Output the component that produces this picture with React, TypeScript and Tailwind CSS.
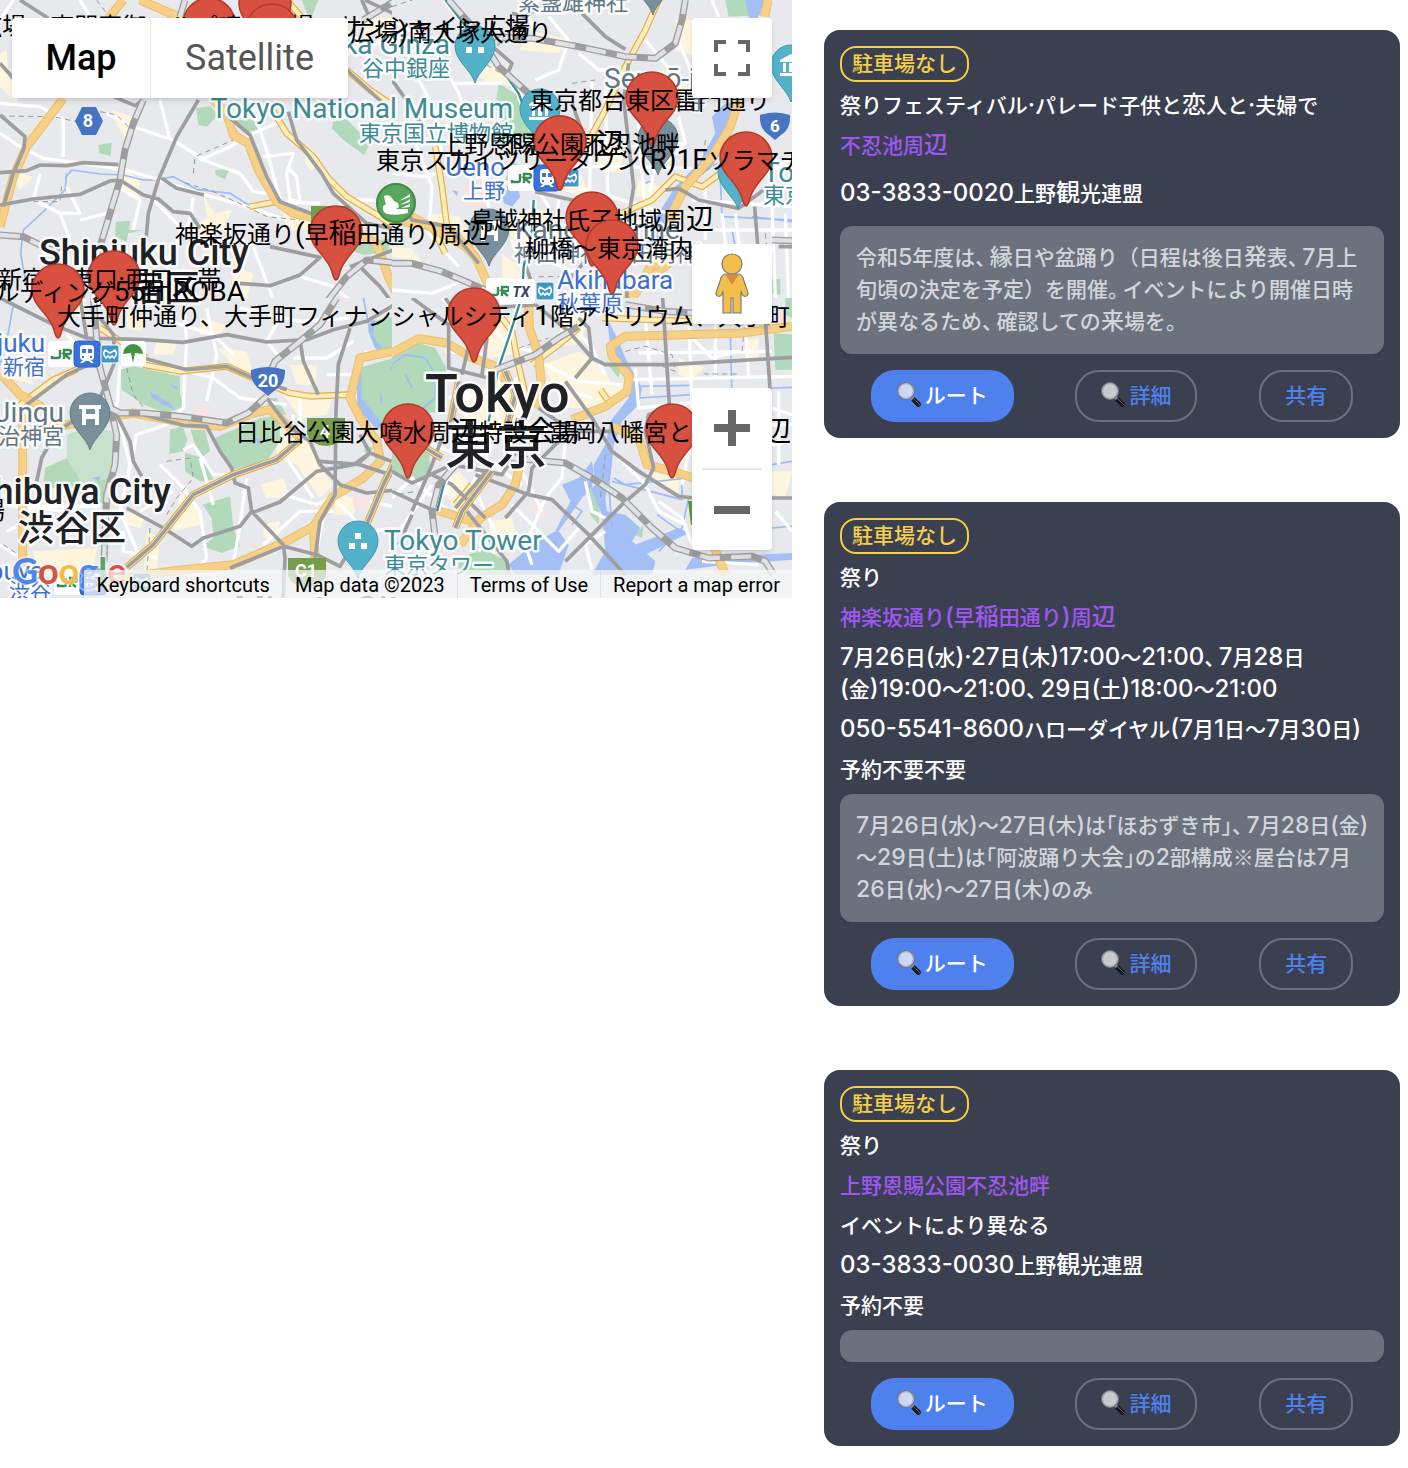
import React from "react";

const CJK = '"Noto Sans CJK JP", sans-serif';
const MAP_FONT = `Roboto, ${CJK}`;

/* ---------- mixed Latin / Japanese text ---------- */

// Latin runs and a few wide kanji are set one size up from the surrounding kana and kanji.
const WIDE = /([\x21-\x7e·]+|[辺稲縁発恋来会観])/;
const PUNCT = /([、。「」～※])/;

function punctClass(ch: string) {
  if (ch === "、" || ch === "。") return "mr-1 [font-feature-settings:'halt']";
  if (ch === "～" || ch === "※") return "font-['Noto_Sans_CJK_JP'] leading-none";
  return "[font-feature-settings:'halt']";
}

function Mixed({ text, small = false }: { text: string; small?: boolean }) {
  return (
    <>
      {text.split(WIDE).map((part, i) =>
        i % 2 ? (
          <span key={i} className={small ? "text-[23px] leading-none" : "text-[24px] leading-none"}>
            {part}
          </span>
        ) : (
          part.split(PUNCT).map((p, j) =>
            j % 2 ? (
              <span key={`${i}-${j}`} className={punctClass(p)}>
                {p}
              </span>
            ) : (
              p
            ),
          )
        ),
      )}
    </>
  );
}

/* ---------- map geometry ---------- */

type Kind =
  | "cream" | "pink" | "park" | "lightPark" | "water" | "stream" | "minor" | "dash"
  | "yellow" | "highway" | "gray" | "edged" | "teal" | "jr";

const ORDER: Kind[] = ["cream", "pink", "lightPark", "park", "water", "stream", "minor", "dash", "yellow", "highway", "gray", "edged", "teal", "jr"];

const PAINT: Record<Kind, { stroke?: string; fill?: string; w?: number; dash?: string }[]> = {
  cream: [{ fill: "#fdf5dd" }],
  pink: [{ fill: "#f8e4e3" }],
  park: [{ fill: "#b2d9b9" }],
  lightPark: [{ fill: "#c6e2cd" }],
  water: [{ fill: "#a3bff6" }],
  stream: [{ stroke: "#9dbcf5", w: 5 }],
  minor: [{ stroke: "#ffffff", w: 10 }],
  dash: [{ stroke: "#9a9a9a", w: 3, dash: "16 12" }],
  yellow: [{ stroke: "#e6ac3c", w: 20 }, { stroke: "#fdedbd", w: 13 }],
  highway: [{ stroke: "#ecc069", w: 27 }, { stroke: "#f5d086", w: 21 }],
  gray: [{ stroke: "#9e9e9e", w: 11 }],
  edged: [{ stroke: "#e6ac3c", w: 22 }, { stroke: "#f6efdc", w: 15 }, { stroke: "#9e9e9e", w: 11 }],
  teal: [{ stroke: "#ffffff", w: 18 }, { stroke: "#3a8c96", w: 7 }],
  jr: [{ stroke: "#9e9e9e", w: 21 }, { stroke: "#dfe1e5", w: 13, dash: "60 34" }],
};

type Tile = { x: number; y: number; paths: Partial<Record<Kind, string[]>> };

const TILES: Tile[] = [
  {
    x: 0,
    y: 0,
    paths: {
      cream: [
        "M0 160L20 150 25 230 60 280 50 310 0 260Z",
        "M335 330L400 350 410 400 375 412 350 375Z",
        "M370 500L420 545 415 590 385 578 355 560Z",
        "M612 590L645 640 695 630 668 690 620 720 560 690 622 655Z",
        "M850 640L930 655 935 690 860 690Z",
        "M920 440L962 470 935 512 915 490Z",
        "M1090 110L1190 90 1180 50 1100 60Z",
        "M60 520L100 530 60 570 50 550Z",
        "M1000 560L1060 590 1020 620Z",
        "M700 800L760 820 740 900 690 900Z",
      ],
      pink: ["M800 290L880 290 850 322Z", "M550 760L590 745 600 800 560 800Z", "M600 860L660 870 650 900 600 900Z"],
      park: [
        "M588 325L630 318 655 345 620 380 595 375Z",
        "M1000 365L1040 358 1110 430 1092 465 1030 420 995 385Z",
        "M295 435L335 428 332 468 298 460Z",
        "M348 665L390 662 388 690 430 690 385 700 380 725 345 710Z",
        "M645 510L688 508 675 538 648 525Z",
        "M905 0L955 0 935 50 970 75 925 50Z",
        "M1030 740L1170 715 1165 755 1090 765Z",
        "M703 360L760 358 775 390 740 397Z",
      ],
      stream: [
        "M0 520L80 512",
        "M195 535L215 510 300 522 370 525 430 540 470 540 520 530 590 568 690 580 755 620",
        "M200 520L195 570 130 635 70 690 62 760 80 860",
      ],
      minor: [
        "M0 400L60 440 130 475 250 490 380 510 480 540 600 580 740 620 860 660",
        "M0 310L120 320 190 360 190 470",
        "M320 340L400 380 520 420 610 480 720 520 760 575 800 580",
        "M480 300L510 420",
        "M600 480L690 440 760 400 830 370",
        "M790 470L880 460 860 520 870 600 900 605 890 530 860 500",
        "M750 300L800 450 840 600",
        "M950 300L1020 340 1100 300",
        "M40 0L0 60",
        "M120 520L100 600 180 640 240 640 200 560",
        "M180 640L210 720 150 800 220 880",
        "M240 660L320 640",
        "M350 560L420 600 400 690",
        "M580 590L570 660 500 780 520 900",
        "M1000 630L1050 600 1120 600 1200 640",
        "M820 605L960 610",
        "M660 680L760 740 820 900",
        "M460 600L540 680 540 740",
        "M900 830L1000 860 1050 900",
        "M240 0L270 50",
        "M1040 130L1100 160 1200 60",
      ],
      dash: [
        "M0 348L160 350 230 365 300 335 350 345 400 395 380 410",
        "M580 520L585 470 700 420 712 395 690 370",
        "M555 548L640 575 740 620 800 650 900 660",
        "M100 605L180 605 185 560",
        "M290 0L320 40",
      ],
      yellow: ["M812 320L860 400 940 470 985 535 1040 590 1140 650 1200 690", "M860 0L905 52", "M1040 210L1110 270 1200 330", "M750 620L830 605"],
      highway: [
        "M370 0L325 55",
        "M190 295L80 440 40 530 0 680",
        "M420 0L540 52",
        "M640 300L680 340 700 405 745 430 775 510 830 605 880 640 950 655",
        "M1050 690L1130 730 1165 830 1200 900",
      ],
      gray: [
        "M60 0L145 55",
        "M0 190L40 235",
        "M0 345L75 410 72 445 40 520 10 620",
        "M0 518L80 512 120 495 200 497 250 488 355 494",
        "M0 615L100 597 240 583 330 543 360 540 430 585 475 597 520 635 570 640 600 685",
        "M340 290L405 317 430 300",
        "M485 535L530 565 612 585",
        "M595 300L530 410 475 540 445 640 438 720",
        "M680 345L750 405 800 530 840 605 945 645",
        "M865 335L890 420 965 520 1000 580 1100 670 1200 690",
        "M810 740L960 772 900 825 810 857 720 850",
        "M1040 210L1150 310 1200 340",
        "M1085 0L1110 55",
        "M1080 800L1140 860 1170 900",
        "M1095 0L1200 50",
        "M1180 750L1050 800",
      ],
      jr: [
        "M430 300L400 370 375 450 360 540 330 640 300 740 240 900",
        "M0 705L70 710 140 745 200 760",
        "M555 0L540 50",
        "M985 900L1040 830 1100 780 1200 790",
        "M1090 60L1190 0",
      ],
    },
  },
  {
    x: 392,
    y: 0,
    paths: {
      cream: [
        "M210 190L330 200 380 260 300 250 220 215Z",
        "M430 95L540 120 500 160 380 150Z",
        "M850 60L920 60 920 170 850 150Z",
        "M350 660L420 620 470 640 440 720 360 740Z",
        "M0 740L60 745 90 785 0 770Z",
        "M470 520L560 510 600 600 480 560Z",
        "M740 540L810 560 800 600 730 590Z",
        "M160 330L240 350 220 400 160 390Z",
        "M620 440L690 440 690 520 620 510Z",
        "M330 760L380 800 400 900 330 880Z",
        "M800 210L880 230 900 330 850 330Z",
        "M120 640L200 650 230 700 120 680Z",
      ],
      pink: ["M215 560L290 540 290 620 220 620Z"],
      park: [
        "M320 250L400 300 420 420 350 400 310 320Z",
        "M1000 0L1110 0 1110 45 1010 50Z",
        "M1140 838L1165 838 1165 885 1140 880Z",
        "M360 480L385 500 370 540 340 540Z",
      ],
      water: [
        "M1060 0L1120 0 1090 70 1070 50Z",
        "M1000 310L1045 310 1010 420 960 500 890 560 870 600 830 650 800 720 770 760 750 720 800 640 850 560 920 490 970 400 960 350Z",
        "M330 570L370 540 385 590 360 620 335 610Z",
        "M180 570L198 575 195 588Z",
        "M640 860L700 850 680 900 630 900Z",
      ],
      stream: ["M985 540L990 650 1200 660", "M760 550L785 540", "M1080 650L1200 665", "M1020 690L1060 900", "M620 860L760 760"],
      minor: [
        "M0 60L120 130 200 280 260 460",
        "M0 180L80 240 130 330 150 470",
        "M400 0L430 110",
        "M470 50L530 120 500 210 430 240",
        "M560 160L620 210 700 210",
        "M540 500L680 500 900 505",
        "M600 240L590 700",
        "M640 250L650 700",
        "M560 420L720 440 880 430",
        "M550 560L830 640",
        "M730 250L760 640",
        "M800 440L760 650",
        "M860 350L880 430 810 500",
        "M400 510L470 620 440 760",
        "M180 250L330 250",
        "M250 410L290 620 330 700",
        "M60 400L120 560 110 700 200 800",
        "M0 520L100 530 200 500",
        "M940 540L940 720",
        "M990 640L1020 900",
        "M1030 640L1050 800",
        "M900 600L1200 620",
        "M940 690L1200 690",
        "M1140 600L1150 900",
        "M1180 640L1190 900",
        "M1060 560L1160 500 1200 470",
        "M400 680L640 800 780 850",
        "M420 760L600 840",
        "M360 720L420 900",
        "M500 600L480 780",
        "M0 870L120 880 220 840",
        "M740 660L740 740",
        "M850 100L900 220",
        "M760 120L860 240",
        "M960 0L980 50",
      ],
      dash: ["M0 20L60 0", "M260 180L360 240 420 280", "M540 250L610 240", "M440 830L540 830 600 900", "M1120 700L1140 900", "M940 420L930 520 990 480"],
      yellow: ["M130 440L150 560 165 680", "M800 0L760 90 700 200 640 330 580 440", "M690 640L780 600 850 530 930 560 1000 510", "M30 640L120 680 160 760"],
      highway: [
        "M1128 0L1118 50",
        "M1040 300L1015 380 960 470 880 560 840 640 815 740 770 810 720 900",
        "M0 660L170 685 250 770 310 900",
        "M60 650L240 750",
        "M840 780L760 850 680 900",
      ],
      gray: [
        "M570 40L640 110 700 148",
        "M0 240L50 310 90 380",
        "M710 190L695 300 725 560 712 640 702 760 705 900",
        "M430 575L540 600 640 620",
        "M820 570L860 565 920 600 1040 625 1115 570",
        "M1088 620L1110 900",
        "M0 560L60 660 170 680 260 790",
        "M540 310L580 420",
        "M380 740L420 850 400 900",
        "M290 130L360 190 350 215",
        "M470 0L400 50 360 40",
        "M530 840L600 760 680 660",
        "M1160 740L1200 740",
      ],
      teal: ["M160 0L230 90 310 180 380 280 420 390", "M425 600L420 690 395 800 390 900"],
      jr: [
        "M310 130L330 112 420 115 560 140 700 170 790 175 850 130 870 60 880 0",
        "M170 0L250 90 320 200 420 290",
        "M0 790L60 790 150 815 210 840 280 870",
        "M1140 720L1200 722",
      ],
    },
  },
  {
    x: 0,
    y: 298,
    paths: {
      cream: [
        "M190 0L260 0 250 60 200 40Z",
        "M470 130L530 140 520 170 460 170Z",
        "M380 30L440 60 420 100 380 90Z",
        "M600 60L680 80 660 110 600 110Z",
        "M820 380L920 430 960 510 1000 560 960 600 890 500 830 470Z",
        "M850 290L1000 300 980 350 900 360Z",
        "M650 150L740 160 760 230 700 200Z",
        "M780 560L850 540 870 600 800 600Z",
        "M370 640L440 650 420 690 380 680Z",
        "M100 760L290 750 280 820 110 840Z",
        "M540 580L600 640 600 680 520 700Z",
        "M10 180L80 170 100 260 30 240Z",
        "M790 680L840 670 830 720 790 720Z",
        "M1010 590L1080 600 1060 650 1000 650Z",
        "M440 700L480 720 470 830 430 830Z",
        "M870 200L950 200 950 260 890 260Z",
      ],
      pink: ["M575 325L625 325 625 355 590 355Z", "M1060 590L1110 600 1100 635 1060 630Z", "M1010 0L1040 0 1040 20Z"],
      lightPark: ["M200 410L270 385 335 400 345 440 325 540 340 600 250 560 200 480Z"],
      park: [
        "M360 215L400 205 540 235 540 290 552 325 500 345 430 320 365 275Z",
        "M135 510L200 480 250 560 330 540 320 620 130 560Z",
        "M510 395L548 385 562 425 550 460 508 468Z",
        "M572 395L615 395 630 460 605 478 585 440Z",
        "M645 420L780 360 838 352 840 430 800 490 700 515 668 470Z",
        "M555 465L612 480 640 545 600 550 555 520Z",
        "M608 620L690 595 700 690 720 745 665 765 605 745 640 720 635 660Z",
        "M1118 70L1200 50 1200 150 1130 160 1105 100Z",
        "M1075 210L1200 175 1200 430 1130 390 1075 320Z",
        "M1090 440L1120 450 1100 480Z",
        "M790 300L830 300 860 350 820 350Z",
      ],
      water: [
        "M450 280L510 315 525 335 490 320 455 300Z",
        "M1070 215L1085 215 1085 300 1150 380 1130 395 1072 330Z",
        "M1110 70L1125 65 1118 110 1150 155 1125 150 1105 100Z",
        "M1140 285L1150 300 1140 320Z",
        "M765 420L780 425 778 445Z",
        "M275 540L300 535 298 550Z",
        "M505 258L532 265 530 275Z",
        "M1165 200L1185 215 1175 220Z",
      ],
      stream: ["M0 200L20 130 40 20", "M1090 0L1110 100"],
      minor: [
        "M550 0L560 130 555 220 550 330 500 380 410 410 380 560",
        "M620 30L650 170 620 310",
        "M700 170L640 110 480 60",
        "M720 30L900 70 1050 60",
        "M0 110L100 160",
        "M0 590L120 625 300 625",
        "M0 620L200 640",
        "M0 740L90 800",
        "M360 200L350 340 390 500 360 640 420 780",
        "M560 220L640 240 720 300 860 320",
        "M550 455L580 440 640 530 700 530",
        "M540 560L600 640 620 780 580 830",
        "M740 540L720 680 700 800",
        "M600 480L640 620",
        "M480 500L560 580",
        "M790 740L900 640 1000 640",
        "M980 230L1060 230 1100 160",
        "M880 180L980 180 1060 130",
        "M880 350L860 480 940 600",
        "M900 300L900 430",
        "M1000 600L1100 700 1200 690",
        "M1110 610L1200 630",
        "M200 110L250 160 180 200",
        "M130 570L60 680 20 700",
        "M850 40L800 130 840 180",
        "M420 640L520 580",
        "M370 700L370 760 470 780",
        "M980 600L950 760",
        "M470 820L640 830 660 900",
        "M850 590L950 620 1010 590",
      ],
      dash: ["M380 210L400 290 440 340", "M500 490L570 480 580 540 530 600 500 650", "M10 740L100 800", "M450 690L440 830"],
      yellow: ["M430 200L540 220 680 205 760 240 870 285 930 295 1050 290", "M60 320L160 245 230 215", "M300 90L440 180"],
      highway: [
        "M0 225L60 290 130 330 160 345",
        "M68 350L68 900",
        "M0 430L150 390 280 365 400 345 560 375 660 385 760 345 810 335 850 370 900 420",
        "M1200 155L1080 180 1050 300 1080 360 1130 430 1142 490 1090 540 1000 595 940 685 850 735 700 800 550 815 400 835 280 880",
        "M940 680L945 780",
      ],
      gray: [
        "M430 125L550 133 680 110 800 132 920 125 1000 95 1100 70 1200 10",
        "M430 180L560 215 680 205 760 240 860 275",
        "M60 30L160 80 260 120 430 125",
        "M900 125L910 190 955 290",
        "M1050 90L1015 200 1008 340 1005 590 960 670 945 780",
        "M300 60L340 110 345 190 300 300",
        "M80 320L200 230 290 190",
        "M110 550L125 480 170 400 300 320",
        "M350 350L390 430 400 490 425 535",
        "M430 350L550 382 620 385 660 460 695 510 705 555 745 570 755 640 850 740 855 780 850 900",
        "M755 645L840 612 950 520 1060 500 1110 465 1200 500",
        "M380 630L490 690 575 745 610 720 720 685 755 640",
        "M690 810L850 745 950 770 1020 805 1060 740",
        "M800 300L860 380 930 430 960 500 1020 560 1100 585 1200 575",
        "M960 490L1080 500 1200 540",
        "M1070 500L1110 465 1080 410",
        "M0 0L60 30",
        "M240 0L260 120",
      ],
      edged: ["M900 425L830 485 700 530 580 590 460 740 380 808", "M1190 480L1150 560 1100 680"],
      jr: [
        "M280 0L290 120 300 210 330 320 350 410 345 500 320 590 312 790",
        "M330 330L360 345 430 345 540 355 680 375 745 345 800 295",
        "M810 225L825 190 900 130 960 80 1010 0",
      ],
    },
  },
  {
    x: 392,
    y: 298,
    paths: {
      cream: [
        "M270 60L370 60 360 170 290 180Z",
        "M450 200L560 160 640 220 680 300 620 330 520 330Z",
        "M210 290L380 240 400 330 350 420 220 420Z",
        "M520 60L580 90 560 140 480 150Z",
        "M290 670L360 660 380 740 300 770Z",
        "M860 180L940 210 900 240 860 230Z",
        "M1060 130L1100 120 1100 180 1060 180Z",
        "M1140 520L1200 520 1180 600 1140 590Z",
        "M150 560L200 520 270 600 200 660Z",
        "M770 520L860 540 860 590 800 560Z",
        "M660 270L700 250 680 320 640 330Z",
        "M500 50L600 40 560 90Z",
      ],
      pink: ["M415 620L465 640 460 660 420 645Z", "M1120 50L1180 40 1190 90 1140 80Z"],
      park: [
        "M0 175L60 130 130 150 162 210 165 310 130 345 0 330Z",
        "M0 450L110 450 115 520 60 555 0 520Z",
        "M1145 105L1200 110 1200 215 1150 215Z",
        "M200 790L265 748 345 790 360 830 200 830Z",
        "M1180 0L1200 0 1200 60 1180 50Z",
        "M640 190L690 200 680 240Z",
        "M590 560L625 590 620 680 595 650Z",
        "M730 710L755 680 750 720Z",
      ],
      water: [
        "M645 60L680 130 700 180 750 270 740 320 690 370 665 440 655 520 640 600 645 640 700 650 745 690 720 730 790 790 780 830 600 830 640 760 630 650 600 580 605 500 640 440 655 370 710 300 715 240 660 190Z",
        "M600 490L560 540 510 560 535 610 490 700 420 740 350 800 370 830 500 830 530 740 500 700 570 600 610 560Z",
        "M900 780L1200 765 1200 785 1000 800 880 815Z",
        "M680 760L860 690 890 705 760 770Z",
      ],
      stream: [
        "M0 200L40 170 100 180 130 230 130 300 80 340",
        "M40 230L60 270",
        "M740 300L900 290",
        "M740 265L900 262",
        "M665 540L700 560 890 540",
        "M890 600L870 690 800 760",
        "M660 550L870 605 870 530",
        "M795 650L880 710",
        "M540 620L570 640 540 680",
        "M1140 270L1200 268",
        "M1015 110L1020 290",
        "M1140 690L1200 685",
        "M660 470L650 560 660 690",
        "M1140 500L1200 490",
      ],
      minor: [
        "M740 165L1140 160",
        "M730 210L740 330 1140 290",
        "M760 60L780 290",
        "M890 40L900 330",
        "M970 60L970 240",
        "M1060 60L1070 240",
        "M720 245L1200 235",
        "M900 120L960 180 1040 160",
        "M480 20L600 150 640 230",
        "M300 90L350 140 420 160",
        "M460 200L560 250 690 260",
        "M450 250L600 300",
        "M520 430L510 540 460 600",
        "M580 550L600 640 640 660",
        "M350 440L450 640",
        "M300 440L240 560 310 700 260 760",
        "M360 620L500 760 560 690",
        "M460 600L400 740 420 800",
        "M200 450L260 470 390 560",
        "M120 440L200 470 160 590",
        "M0 600L60 540 180 650",
        "M20 700L120 560",
        "M380 240L260 290 170 300",
        "M330 230L300 300 340 420",
        "M380 250L370 370 300 400",
        "M230 250L220 390",
        "M160 160L280 170",
        "M680 480L760 560 800 640 880 680",
        "M900 410L870 560",
        "M820 390L1200 380",
        "M800 610L870 660 900 740",
        "M1140 330L1200 350",
        "M1140 440L1200 430",
        "M1150 640L1200 700",
        "M1160 280L1160 500",
        "M930 790L1100 800",
        "M150 0L200 50 280 80",
        "M640 700L580 740 600 815",
      ],
      dash: ["M700 160L760 145 840 170 850 220 770 190", "M935 225L940 228 1040 228", "M380 150L470 120", "M640 470L625 600", "M1060 60L1050 160", "M20 590L70 580", "M930 480L1000 500"],
      yellow: ["M330 60L360 100 375 180 400 290", "M420 200L500 140 560 90", "M630 60L900 70", "M625 275L650 310", "M240 560L190 620"],
      highway: [
        "M0 165L80 122 165 135 240 180 310 205 350 260",
        "M410 0L412 90 440 170 447 250 430 330",
        "M540 365L640 325 705 280 712 235 660 175 655 145 700 115 830 112 1050 105 1200 85",
        "M660 385L740 420 765 500 840 520 905 540",
        "M390 470L370 560 330 620 265 660 205 740",
        "M130 635L240 670",
        "M965 745L1000 830",
      ],
      gray: [
        "M160 0L215 80 300 100",
        "M60 0L170 80 170 210 310 245",
        "M430 20L530 100 600 180 640 200 830 200 1000 190 1200 178",
        "M560 60L590 90 600 180 550 240",
        "M812 0L832 320",
        "M1120 60L1135 290",
        "M430 20L300 30 180 60",
        "M520 250L600 360 660 460 740 520 860 595 910 600",
        "M830 325L770 350 760 400 785 510 760 560 690 620 520 790",
        "M250 530L410 590 480 605 590 710 700 830",
        "M340 660L410 580 420 510 500 430",
        "M0 580L130 640",
        "M0 520L60 555 180 500 330 530 380 450",
        "M225 640L345 790 350 820",
        "M210 230L240 100",
        "M270 230L285 120",
        "M190 630L300 500",
        "M60 650L20 740",
        "M1140 600L1200 600",
        "M60 640L120 500 150 420",
        "M280 660L180 560 120 530",
        "M440 330L540 400 660 400",
      ],
      edged: ["M300 520L210 640 190 690", "M200 250L170 400", "M340 220L370 290 340 400", "M100 450L150 480"],
      teal: ["M388 0L350 120 318 215 290 370", "M180 500L155 560 135 640"],
      jr: [
        "M310 215L430 170 500 120 560 85",
        "M260 430L200 490 140 560 120 640 130 720",
        "M360 480L520 495 600 540 690 600 780 690 850 750 950 780 1080 775 1120 790 1145 830",
        "M700 20L820 40 900 45",
      ],
    },
  },
];

function MapTile({ x, y, paths }: Tile) {
  return (
    <svg x={x} y={y} width="400" height="300" viewBox="0 0 1200 900">
      <rect width="1200" height="900" fill="#e7e9ed" />
      {ORDER.map((kind) => (
        <g key={kind}>
          {PAINT[kind].map((p, i) => (
            <path
              key={i}
              d={(paths[kind] ?? []).join("")}
              fill={p.fill ?? "none"}
              stroke={p.stroke}
              strokeWidth={p.w}
              strokeDasharray={p.dash}
              strokeLinejoin="round"
            />
          ))}
        </g>
      ))}
    </svg>
  );
}

/* ---------- map labels ---------- */

const TEAL = "#3c8a94";
const SLATE = "#607683";
const BLUE = "#3d6fd0";
const INK = "#202124";

type Label = { t: string; x: number; y: number; s: number; c: string; end?: boolean; w?: number };

const LABELS: Label[] = [
  { t: "素盞雄神社", x: 518, y: 10, s: 22, c: SLATE },
  { t: "Yanaka Ginza", x: 450, y: 54, s: 28, c: TEAL, end: true },
  { t: "谷中銀座", x: 450, y: 76, s: 22, c: TEAL, end: true },
  { t: "Tokyo National Museum", x: 513, y: 118, s: 28, c: TEAL, end: true },
  { t: "東京国立博物館", x: 513, y: 141, s: 22, c: TEAL, end: true },
  { t: "Sensō-ji", x: 604, y: 88, s: 28, c: SLATE },
  { t: "浅草寺", x: 640, y: 109, s: 22, c: SLATE },
  { t: "Ueno", x: 505, y: 176, s: 26, c: BLUE, end: true },
  { t: "上野", x: 505, y: 198, s: 21, c: BLUE, end: true },
  { t: "Tokyo Skytree", x: 763, y: 182, s: 28, c: TEAL },
  { t: "東京スカイツリー", x: 763, y: 203, s: 22, c: TEAL },
  { t: "Kanda Shrine", x: 515, y: 239, s: 28, c: SLATE },
  { t: "神田神社(神田明神)", x: 514, y: 261, s: 22, c: SLATE },
  { t: "Akihabara", x: 557, y: 289, s: 26, c: BLUE },
  { t: "秋葉原", x: 557, y: 311, s: 22, c: BLUE },
  { t: "Shinjuku City", x: 249, y: 265, s: 36, c: INK, end: true, w: 500 },
  { t: "新宿区", x: 92, y: 301, s: 36, c: INK, w: 500 },
  { t: "Shinjuku", x: 45, y: 352, s: 26, c: BLUE, end: true },
  { t: "新宿", x: 45, y: 374, s: 21, c: BLUE, end: true },
  { t: "Meiji Jingu", x: 64, y: 422, s: 28, c: SLATE, end: true },
  { t: "明治神宮", x: 64, y: 444, s: 22, c: SLATE, end: true },
  { t: "Shibuya City", x: 171, y: 504, s: 36, c: INK, end: true, w: 500 },
  { t: "渋谷区", x: 18, y: 541, s: 36, c: INK, w: 500 },
  { t: "Tokyo", x: 425, y: 412, s: 54, c: INK, w: 500 },
  { t: "東京", x: 445, y: 464, s: 51, c: INK, w: 500 },
  { t: "Tokyo Tower", x: 384, y: 550, s: 28, c: TEAL },
  { t: "東京タワー", x: 384, y: 573, s: 22, c: TEAL },
  { t: "Shibuya", x: 44, y: 580, s: 26, c: BLUE, end: true },
  { t: "渋谷", x: 9, y: 598, s: 21, c: BLUE },
  { t: "Minato City", x: 234, y: 622, s: 36, c: INK, w: 500 },
];

type Poi = { x: number; y: number; c: string; e: string; icon: "torii" | "museum" | "dots" | "squares" | "none" };

const POIS: Poi[] = [
  { x: 653, y: -22, c: "#78909c", e: "#607d8b", icon: "none" },
  { x: 475, y: 46, c: "#53b1c9", e: "#3f97ae", icon: "squares" },
  { x: 540, y: 109, c: "#53b1c9", e: "#3f97ae", icon: "museum" },
  { x: 791, y: 65, c: "#53b1c9", e: "#3f97ae", icon: "museum" },
  { x: 658, y: 138, c: "#7a8f9c", e: "#607d8b", icon: "none" },
  { x: 738, y: 172, c: "#53b1c9", e: "#3f97ae", icon: "none" },
  { x: 489, y: 229, c: "#7a8f9c", e: "#607d8b", icon: "torii" },
  { x: 90, y: 413, c: "#7a8f9c", e: "#607d8b", icon: "torii" },
  { x: 358, y: 541, c: "#53b1c9", e: "#3f97ae", icon: "dots" },
];

function PoiPin({ x, y, c, e, icon }: Poi) {
  return (
    <g transform={`translate(${x} ${y})`}>
      <path d="M0 37C-3 25-20 15-20 0A20 20 0 0 1 20 0C20 15 3 25 0 37Z" fill={c} stroke={e} />
      {icon === "dots" && <path d="M-3-8h6v6h-6zM-9 2h6v6h-6zM3 2h6v6h-6z" fill="#fff" />}
      {icon === "squares" && <path d="M-9 1h6v6h-6zM3 1h6v6h-6z" fill="#fff" />}
      {icon === "torii" && <path d="M-11-8h22v4h-2v16h-4V6h-9v6h-4V-4h-3zM-4-4v5h9v-5z" fill="#fff" fillRule="evenodd" />}
      {icon === "museum" && <path d="M-11-5L0-11 11-5v2h-22zM-8-2h3v9h-3zM-2-2h4v9h-4zM5-2h3v9H5zM-11 8h22v3h-22z" fill="#fff" />}
    </g>
  );
}

function JrIcon({ x, y }: { x: number; y: number }) {
  return (
    <g transform={`translate(${x} ${y})`}>
      <rect x="-13" y="-13" width="27" height="26" rx="3" fill="#fff" />
      <path d="M-9 2v2h6q2 0 2-2v-6M3 5v-9h5q2 0 2 2t-2 2h-5l6 5" fill="none" stroke="#3a8a58" strokeWidth="2.4" />
    </g>
  );
}

function TrainIcon({ x, y }: { x: number; y: number }) {
  return (
    <g transform={`translate(${x} ${y})`}>
      <rect x="-13" y="-13" width="26" height="26" rx="4" fill="#3872dd" stroke="#2d5fc4" />
      <path d="M-7-6q0-3 4-3h6q4 0 4 3v9q0 3-3 3l3 3h-3l-2-2h-4l-2 2h-3l3-3q-3 0-3-3zM-5-5v4h4v-4zM1-5v4h4v-4zM-5 2v2h2v-2zM3 2v2h2v-2z" fill="#fff" fillRule="evenodd" />
    </g>
  );
}

function MetroIcon({ x, y }: { x: number; y: number }) {
  return (
    <g transform={`translate(${x} ${y})`}>
      <rect x="-9" y="-9" width="18" height="18" rx="2" fill="#3f97c6" stroke="#fff" />
      <path d="M0-1L-5-4Q-8 0-4 4L-2 2 0 4 2 2 4 4Q8 0 5-4Z" fill="none" stroke="#fff" strokeWidth="1.6" />
    </g>
  );
}

/* ---------- event markers ---------- */

type Marker = { x: number; y: number; label: string; lx: number; end?: boolean };

const MARKERS: Marker[] = [
  { x: 265, y: 52, label: "", lx: 0 },
  { x: 209, y: 72, label: "トンネル広場・東門専御アルパ噴水広場・サンシャイン広場", lx: 530, end: true },
  { x: 272, y: 78, label: "大塚駅前(トランパル大塚・広場)南大塚大通り", lx: 552, end: true },
  { x: 652, y: 146, label: "東京都台東区雷門通り", lx: 530 },
  { x: 560, y: 190, label: "不忍池周辺", lx: 500 },
  { x: 560, y: 190, label: "上野恩賜公園不忍池畔", lx: 440 },
  { x: 746, y: 206, label: "東京スカイツリータウン(R)1Fソラマチひろば", lx: 376 },
  { x: 592, y: 266, label: "鳥越神社氏子地域周辺", lx: 470 },
  { x: 336, y: 280, label: "神楽坂通り(早稲田通り)周辺", lx: 175 },
  { x: 612, y: 294, label: "柳橋～東京湾内", lx: 525 },
  { x: 114, y: 325, label: "新宿駅東口·西口一帯", lx: -2 },
  { x: 58, y: 338, label: "新宿三井ビルディング55HIROBA", lx: 245, end: true },
  { x: 474, y: 362, label: "大手町仲通り、大手町フィナンシャルシティ1階アトリウム、大手町", lx: 57 },
  { x: 408, y: 478, label: "日比谷公園大噴水周辺特設会場", lx: 235 },
  { x: 672, y: 478, label: "富岡八幡宮とその周辺", lx: 548 },
  { x: -80, y: 556, label: "代々木公園広場", lx: 5, end: true },
];

function MarkerPin({ x, y, label, lx, end }: Marker) {
  return (
    <g>
      <path
        transform={`translate(${x} ${y})`}
        d="M0 0C-2 0-3-4-4-8C-8-24-26-32-26-48A26 26 0 0 1 26-48C26-32 8-24 4-8C3-4 2 0 0 0Z"
        fill="#d85040"
        stroke="#b23a2c"
        strokeWidth="1.5"
      />
      <text x={lx} y={y - 37} fontSize="24" fill="#000" textAnchor={end ? "end" : "start"}>
        {label.split(/([\x21-\x7e·]+|[辺稲会])/).map((p, i) =>
          i % 2 ? (
            <tspan key={i} fontSize="28">
              {p}
            </tspan>
          ) : (
            p
          ),
        )}
      </text>
    </g>
  );
}

function MapCanvas() {
  return (
    <svg className="absolute inset-0 h-full w-full" viewBox="0 0 792 598" preserveAspectRatio="xMidYMid slice" fontFamily={MAP_FONT} role="img" aria-label="Map of Tokyo">
      {TILES.map((t) => (
        <MapTile key={`${t.x}-${t.y}`} {...t} />
      ))}

      <path d="M82 107h14l7 14-7 14H82l-7-14z" fill="#4674c2" />
      <text x="88" y="127" fontSize="18" fontWeight="700" fill="#fff" textAnchor="middle">8</text>
      <path d="M251 370q17-6 34 0q1 14-11 21l-6 5-6-5q-12-7-11-21z" fill="#4674c2" />
      <text x="268" y="387" fontSize="18" fontWeight="700" fill="#fff" textAnchor="middle">20</text>
      <path d="M760 115q15-5 30 0q1 14-9 20l-6 5-6-5q-10-6-9-20z" fill="#4674c2" />
      <text x="775" y="132" fontSize="17" fontWeight="700" fill="#fff" textAnchor="middle">6</text>
      <path d="M311 206h38v24h-38z" fill="#759d4c" />
      <path d="M307 418h38v16q-4 11-19 12q-15-1-19-12z" fill="#759d4c" />
      <text x="325" y="438" fontSize="18" fontWeight="700" fill="#fff" textAnchor="middle">4</text>
      <path d="M288 558h38v18q-4 10-19 11q-15-1-19-11z" fill="#759d4c" />
      <text x="306" y="577" fontSize="18" fontWeight="700" fill="#fff" textAnchor="middle">C1</text>
      <path d="M688 501h20v24h-17z" fill="#5f9440" />

      {POIS.map((p) => (
        <PoiPin key={`${p.x}-${p.y}`} {...p} />
      ))}
      <circle cx="396" cy="203" r="19" fill="#58a65c" stroke="#3f8a46" strokeWidth="2" />
      <path d="M384 196q5-2 7 1l3 4 4 2 1 4-3 2h12v4q-11 3-21 1-5-2-4-8l3-2-1-3zM399 201l11-7v3zM400 205l10-6v3zM401 208l9-4v3z" fill="#fff" />

      {LABELS.map((l) => (
        <text
          key={l.t + l.y}
          x={l.x}
          y={l.y}
          fontSize={l.s}
          fontWeight={l.w ?? 400}
          fill={l.c}
          textAnchor={l.end ? "end" : "start"}
          stroke="#fff"
          strokeOpacity="0.85"
          strokeWidth="5"
          strokeLinejoin="round"
          paintOrder="stroke"
        >
          {l.t}
        </text>
      ))}

      <JrIcon x={61} y={354} />
      <TrainIcon x={87} y={354} />
      <MetroIcon x={110} y={354} />
      <rect x="121" y="341" width="25" height="25" rx="3" fill="#fff" />
      <path d="M123 354a10 10 0 0 1 20 0l-8-1-2 10-2-10z" fill="#45923f" />
      <JrIcon x={521} y={178} />
      <TrainIcon x={547} y={178} />
      <MetroIcon x={570} y={178} />
      <JrIcon x={499} y={291} />
      <rect x="509" y="279" width="26" height="25" rx="3" fill="#fff" />
      <text x="521" y="297" fontSize="14" fontWeight="700" fontStyle="italic" fill="#2c3f66" textAnchor="middle">TX</text>
      <MetroIcon x={545} y={291} />
      <JrIcon x={67} y={582} />
      <TrainIcon x={93} y={582} />
      <MetroIcon x={142} y={582} />

      {MARKERS.map((m, i) => (
        <MarkerPin key={i} {...m} />
      ))}
    </svg>
  );
}

const GOOGLE: [string, string][] = [
  ["G", "text-[#4f86ec]"],
  ["o", "text-[#d9503f]"],
  ["o", "text-[#f2bd42]"],
  ["g", "text-[#4f86ec]"],
  ["l", "text-[#58a65c]"],
  ["e", "text-[#d9503f]"],
];

function Pegman() {
  return (
    <svg width="36" height="62" viewBox="0 0 36 62" aria-hidden="true">
      <path
        d="M11 21h14q3 1 4 4l5 15q0 3-3 3.500-2 0-3-2.500l-1-3v22h-8V45h-2v15h-8V38l-1 3q-1 2.500-3 2.500-3-.5-3-3.500l5-15q1-3 4-4z"
        fill="#f3bf4b"
        stroke="#7d7d7d"
        strokeWidth="1.2"
      />
      <path d="M11 21h14l-7 11z" fill="#d68a3f" />
      <circle cx="18" cy="11" r="10" fill="#f3bf4b" stroke="#7d7d7d" strokeWidth="1.2" />
    </svg>
  );
}

const CONTROL = "flex h-20 w-20 items-center justify-center rounded bg-white shadow-md";

function MapPanel() {
  return (
    <section className="relative aspect-[792/598] self-start overflow-hidden font-[Roboto]">
      <MapCanvas />

      <div className="absolute top-[18px] left-3 flex rounded bg-white text-4xl shadow-md">
        <button type="button" className="h-20 w-[139px] border-r border-gray-200 font-medium text-black">
          Map
        </button>
        <button type="button" className="h-20 w-[197px] text-[#565656]">
          Satellite
        </button>
      </div>

      <button type="button" aria-label="Toggle fullscreen view" className={`${CONTROL} absolute top-[18px] right-5`}>
        <svg width="36" height="36" viewBox="0 0 36 36" fill="#666" aria-hidden="true">
          <path d="M0 0h12v4H4v8H0zM24 0h12v12h-4V4h-8zM0 24h4v8h8v4H0zM32 24h4v12H24v-4h8z" />
        </svg>
      </button>

      <div className="absolute right-5 bottom-12 flex flex-col gap-16">
        <button type="button" aria-label="Open Street View" className={CONTROL}>
          <Pegman />
        </button>
        <div className="flex w-20 flex-col items-center rounded bg-white shadow-md">
          <button type="button" aria-label="Zoom in" className="flex h-20 w-20 items-center justify-center">
            <svg width="36" height="36" viewBox="0 0 36 36" fill="#666" aria-hidden="true">
              <path d="M14 0h8v14h14v8H22v14h-8V22H0v-8h14z" />
            </svg>
          </button>
          <span className="h-0.5 w-[60px] bg-[#e6e6e6]" />
          <button type="button" aria-label="Zoom out" className="flex h-20 w-20 items-center justify-center">
            <svg width="36" height="8" viewBox="0 0 36 8" fill="#666" aria-hidden="true">
              <path d="M0 0h36v8H0z" />
            </svg>
          </button>
        </div>
      </div>

      <a
        href="#google"
        aria-label="Google"
        className="absolute bottom-1 left-3 font-['Lato'] text-4xl leading-[48px] font-bold [-webkit-text-stroke:3px_rgba(255,255,255,0.5)] [paint-order:stroke]"
      >
        {GOOGLE.map(([ch, color], i) => (
          <span key={i} className={color}>
            {ch}
          </span>
        ))}
      </a>

      <footer className="absolute right-0 bottom-0 flex h-7 divide-x divide-gray-300/60 bg-[#f5f5f5]/75 text-xl leading-[30px] whitespace-nowrap text-black">
        <button type="button" className="px-3">
          Keyboard shortcuts
        </button>
        <span className="px-3">Map data ©2023</span>
        <a href="#terms" className="px-3">
          Terms of Use
        </a>
        <a href="#report" className="px-3">
          Report a map error
        </a>
      </footer>
    </section>
  );
}

/* ---------- event cards ---------- */

type EventInfo = { kind: string; place: string; details: string[]; note: string };

const EVENTS: EventInfo[] = [
  {
    kind: "祭りフェスティバル·パレード子供と恋人と·夫婦で",
    place: "不忍池周辺",
    details: ["", "03-3833-0020上野観光連盟", ""],
    note: "令和5年度は、縁日や盆踊り（日程は後日発表、7月上旬頃の決定を予定）を開催。イベントにより開催日時が異なるため、確認しての来場を。",
  },
  {
    kind: "祭り",
    place: "神楽坂通り(早稲田通り)周辺",
    details: ["7月26日(水)·27日(木)17:00～21:00、7月28日(金)19:00～21:00、29日(土)18:00～21:00", "050-5541-8600ハローダイヤル(7月1日～7月30日)", "予約不要不要"],
    note: "7月26日(水)～27日(木)は「ほおずき市」、7月28日(金)\n～29日(土)は「阿波踊り大会」の2部構成※屋台は7月\n26日(水)～27日(木)のみ",
  },
  {
    kind: "祭り",
    place: "上野恩賜公園不忍池畔",
    details: ["イベントにより異なる", "03-3833-0030上野観光連盟", "予約不要"],
    note: "",
  },
];

function Magnifier({ glass }: { glass: string }) {
  return (
    <svg width="24" height="26" viewBox="0 0 24 26" className="-mt-1" aria-hidden="true">
      <path d="M14 16l4 4" stroke="#8b8b8b" strokeWidth="3" />
      <path d="M16 18l7 7" stroke="#17191d" strokeWidth="5" />
      <path d="M17 18l6 6" stroke="#60646b" strokeWidth="1" />
      <circle cx="9" cy="10" r="8" fill={glass} stroke="#74777c" strokeWidth="2" />
      <circle cx="9" cy="10" r="7.500" fill="none" stroke="#c9ccd0" strokeWidth="0.800" />
    </svg>
  );
}

const BUTTON = "flex h-[52px] items-center gap-1 rounded-3xl border-2 px-6";

function EventCard({ kind, place, details, note }: EventInfo) {
  return (
    <article className="flex flex-col items-start rounded-2xl bg-[#3b4050] p-4 font-medium text-white">
      <span className="mb-2 rounded-2xl border-2 border-[#f6cf46] px-2.5 leading-8 text-[#f6cf46]">駐車場なし</span>
      <p className="mb-2">
        <Mixed text={kind} />
      </p>
      <p className="mb-2 text-[#9f57f2]">
        <Mixed text={place} />
      </p>
      {details.map((d, i) => (
        <p key={i} className="mb-2">
          <Mixed text={d} />
        </p>
      ))}
      <p className="w-full rounded-xl bg-[#6c717e] py-4 pr-3 pl-4 whitespace-pre-line text-[#d2d5da]">
        <Mixed text={note} small />
      </p>
      <div className="mt-4 flex w-full justify-around">
        <button type="button" className={`${BUTTON} border-[#4f81ee] bg-[#4f81ee] text-white`}>
          <Magnifier glass="#cbd7f5" />
          ルート
        </button>
        <button type="button" className={`${BUTTON} border-[#6c717e] text-[#4f81ee]`}>
          <Magnifier glass="#c9cbce" />
          詳細
        </button>
        <button type="button" className={`${BUTTON} border-[#6c717e] text-[#4f81ee]`}>
          共有
        </button>
      </div>
    </article>
  );
}

export default function App() {
  return (
    <main className="grid min-h-screen grid-cols-[11fr_8fr] gap-8 bg-white pr-2">
      <MapPanel />
      <div className="flex flex-col gap-16 pt-[30px] pb-5 font-['Inter','Noto_Sans_CJK_JP',sans-serif] text-[21px] leading-8">
        {EVENTS.map((e, i) => (
          <EventCard key={i} {...e} />
        ))}
      </div>
    </main>
  );
}
